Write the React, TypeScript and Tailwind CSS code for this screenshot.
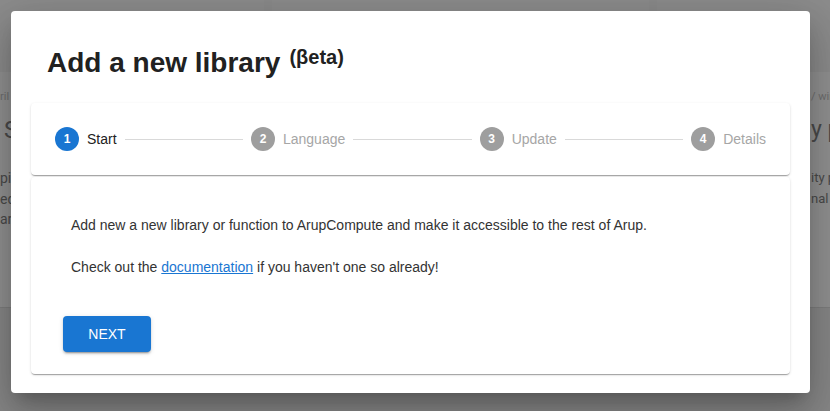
import { Fragment } from 'react';

const steps = ['Start', 'Language', 'Update', 'Details'];

function Backdrop() {
  return (
    <div className="absolute inset-0 flex flex-col bg-[#8a8a8a] font-['Roboto',sans-serif]">
      <div className="flex h-[72px] shrink-0 gap-[8px]">
        <div className="w-[264px] bg-[#8c8c8c]" />
        <div className="w-[377px] bg-[#8c8c8c]" />
        <div className="flex-1 bg-[#8c8c8c]" />
      </div>
      <div className="flex h-[236px] shrink-0 border-b border-[#7e7e7e] bg-[#919191]">
        <div className="w-[264px] overflow-hidden pt-[18px] text-[#4a4a4a]">
          <div className="text-[11px] leading-[14px] text-[#6e6e6e]">ril 2019</div>
          <div className="mt-[10px] pl-[4px] text-[24px] leading-[32px]">Structural</div>
          <div className="mt-[22px] text-[14px] leading-[20.5px]">
            <div>pipe sizing</div>
            <div>ed tools</div>
            <div>ard checks</div>
          </div>
        </div>
        <div className="flex-1" />
        <div className="w-[173px] overflow-hidden pl-[154px] pt-[18px] text-[#4a4a4a]">
          <div className="whitespace-nowrap text-[11px] leading-[14px] text-[#6e6e6e]">/ wind</div>
          <div className="mt-[10px] whitespace-nowrap text-[23px] leading-[32px]">y pile</div>
          <div className="mt-[22px] whitespace-nowrap text-[13px] leading-[20.5px]">
            <div>ity pro</div>
            <div>nal</div>
          </div>
        </div>
      </div>
      <div className="flex-1 bg-[#878787]" />
    </div>
  );
}

function Stepper() {
  return (
    <div className="flex h-[72px] items-center rounded-[4px] bg-white px-[16px] shadow-[0_2px_1px_-1px_rgba(0,0,0,0.2),0_1px_1px_0_rgba(0,0,0,0.14),0_1px_3px_0_rgba(0,0,0,0.12)]">
      {steps.map((label, i) => (
        <Fragment key={label}>
          <div className="flex shrink-0 items-center gap-[8px] px-[8px]">
            <div
              className={
                i === 0
                  ? 'flex h-[24px] w-[24px] items-center justify-center rounded-full bg-[#1976d2] text-[12px] font-bold text-white'
                  : 'flex h-[24px] w-[24px] items-center justify-center rounded-full bg-[#9e9e9e] text-[12px] font-bold text-white'
              }
            >
              {i + 1}
            </div>
            <span className={i === 0 ? 'text-[14px] text-[#212121]' : 'text-[14px] text-[#a6a6a6]'}>{label}</span>
          </div>
          {i < steps.length - 1 && <div className="h-px flex-1 bg-[#d9d9d9]" />}
        </Fragment>
      ))}
    </div>
  );
}

export default function App() {
  return (
    <div className="relative h-[411px] w-[830px] overflow-hidden font-['Liberation_Sans',Arial,sans-serif]">
      <Backdrop />
      <div className="absolute left-[11px] top-[11px] flex h-[382px] w-[799px] flex-col rounded-[4px] bg-white px-[20px] shadow-[0_11px_15px_-7px_rgba(0,0,0,0.2),0_24px_38px_3px_rgba(0,0,0,0.14),0_9px_46px_8px_rgba(0,0,0,0.12)]">
        <h1 className="flex items-start pl-[16px] pt-[36px] text-[28px] font-bold leading-[32px] text-[#212121]">
          Add a new library
          <sup className="top-0 ml-[9px] mt-[-2px] text-[20px] leading-[24px]">(βeta)</sup>
        </h1>
        <div className="mt-[24px]">
          <Stepper />
        </div>
        <div className="mt-[2px] rounded-[4px] bg-white pb-[22px] pl-[32px] pt-[38px] shadow-[0_2px_1px_-1px_rgba(0,0,0,0.2),0_1px_1px_0_rgba(0,0,0,0.14),0_1px_3px_0_rgba(0,0,0,0.12)]">
          <p className="pl-[8px] text-[14px] leading-[20px] text-[#333333]">
            Add new a new library or function to ArupCompute and make it accessible to the rest of Arup.
          </p>
          <p className="mt-[22px] pl-[8px] text-[14px] leading-[20px] text-[#333333]">
            Check out the{' '}
            <a href="#" className="text-[#1976d2] underline">
              documentation
            </a>{' '}
            if you haven't one so already!
          </p>
          <button className="mt-[39px] h-[36px] w-[88px] rounded-[4px] bg-[#1976d2] text-[14px] text-white shadow-[0_3px_1px_-2px_rgba(0,0,0,0.2),0_2px_2px_0_rgba(0,0,0,0.14),0_1px_5px_0_rgba(0,0,0,0.12)]">
            NEXT
          </button>
        </div>
      </div>
    </div>
  );
}
